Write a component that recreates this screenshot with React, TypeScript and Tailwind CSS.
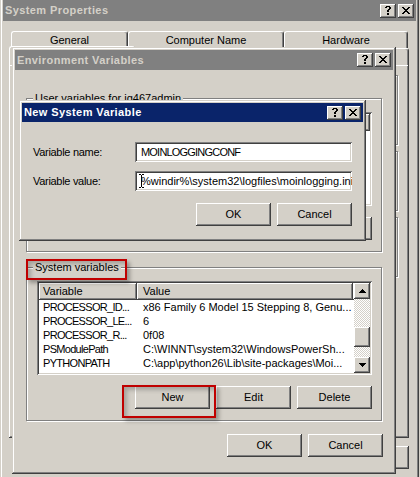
import React from "react";

const raisedWin =
  "shadow-[inset_-1px_-1px_#404040,inset_1px_1px_#d4d0c8,inset_-2px_-2px_#808080,inset_2px_2px_#ffffff]";
const raisedBtn =
  "shadow-[inset_-1px_-1px_#404040,inset_1px_1px_#ffffff,inset_-2px_-2px_#808080]";
const sunken =
  "shadow-[inset_1px_1px_#808080,inset_-1px_-1px_#ffffff,inset_2px_2px_#404040,inset_-2px_-2px_#d4d0c8]";
const etched = "border border-[#808080] shadow-[inset_1px_1px_#ffffff,1px_1px_#ffffff]";

// Pixel glyphs for the caption buttons and scroll arrows
const CLOSE = ["##....##", ".##..##.", "..####..", "...##...", "..####..", ".##..##.", "##....##"];
const HELP = [".####.", "##..##", "....##", "...##.", "..##..", "..##..", "......", "..##..", "..##.."];
const UP = ["...#...", "..###..", ".#####.", "#######"];
const DOWN = ["#######", ".#####.", "..###..", "...#..."];

function Glyph({ rows }: { rows: string[] }) {
  const cells: React.ReactNode[] = [];
  rows.forEach((r, y) =>
    r.split("").forEach((c, x) => {
      if (c === "#") cells.push(<rect key={`${x}-${y}`} x={x} y={y} width={1} height={1} />);
    })
  );
  return (
    <svg width={rows[0].length} height={rows.length} shapeRendering="crispEdges" fill="#000">
      {cells}
    </svg>
  );
}

function CaptionButton({ glyph }: { glyph: string[] }) {
  return (
    <div className={`w-[16px] h-[14px] bg-[#d4d0c8] flex items-center justify-center pr-px pb-px ${raisedBtn}`}>
      <Glyph rows={glyph} />
    </div>
  );
}

function TitleBar({ title, active, h }: { title: string; active?: boolean; h: string }) {
  return (
    <div
      className={`flex items-center justify-between pl-[2px] pr-[2px] shrink-0 ${h} ${
        active ? "bg-[#0a246a] text-white" : "bg-[#808080] text-[#d4d0c8]"
      }`}
    >
      <span className="font-bold text-[11px] tracking-[0.4px]">{title}</span>
      <div className="flex gap-[2px]">
        <CaptionButton glyph={HELP} />
        <CaptionButton glyph={CLOSE} />
      </div>
    </div>
  );
}

function Btn({ children, w = "w-[75px]" }: { children?: React.ReactNode; w?: string }) {
  return (
    <div className={`${w} h-[23px] shrink-0 bg-[#d4d0c8] flex items-center justify-center ${raisedBtn}`}>
      {children}
    </div>
  );
}

function Tab({ label, w, selected }: { label?: string; w: string; selected?: boolean }) {
  return (
    <div
      className={`${w} ${
        selected ? "h-[19px]" : "h-[17px]"
      } shrink-0 flex items-center justify-center border-l border-t border-r border-l-white border-t-white border-r-[#404040] rounded-t-[3px] shadow-[inset_-1px_0_#808080] bg-[#d4d0c8]`}
    >
      {label}
    </div>
  );
}

function HeaderCell({ w, children }: { w: string; children?: React.ReactNode }) {
  return (
    <div className={`${w} h-[17px] shrink-0 bg-[#d4d0c8] flex items-center pl-[4px] ${raisedBtn}`}>{children}</div>
  );
}

type Row = [string, string];

function ScrollBar() {
  return (
    <div className="w-[16px] flex flex-col shrink-0">
      <div className={`h-[16px] bg-[#d4d0c8] flex items-center justify-center pb-px ${raisedBtn}`}>
        <Glyph rows={UP} />
      </div>
      <div className="flex-1 flex flex-col bg-[repeating-conic-gradient(#d4d0c8_0_25%,#ffffff_0_50%)] bg-[length:2px_2px]">
        <div className="h-[28px]" />
        <div className={`h-[20px] bg-[#d4d0c8] ${raisedBtn}`} />
      </div>
      <div className={`h-[16px] bg-[#d4d0c8] flex items-center justify-center ${raisedBtn}`}>
        <Glyph rows={DOWN} />
      </div>
    </div>
  );
}

function ListView({ rows, scroll }: { rows: Row[]; scroll?: boolean }) {
  return (
    <div className={`w-[335px] h-[94px] shrink-0 bg-white p-[2px] flex ${sunken}`}>
      <div className="flex-1 flex flex-col overflow-hidden">
        <div className="flex">
          <HeaderCell w="w-[98px]">{scroll && "Variable"}</HeaderCell>
          <HeaderCell w="w-[216px]">{scroll && <span className="pl-[2px]">Value</span>}</HeaderCell>
          <HeaderCell w="flex-1" />
        </div>
        {rows.map(([k, v]) => (
          <div key={k} className="flex h-[14px] items-center whitespace-nowrap">
            <span className="w-[98px] pl-[4px] shrink-0 tracking-[-0.7px]">{k}</span>
            <span className="pl-[6px]">{v}</span>
          </div>
        ))}
      </div>
      {scroll && <ScrollBar />}
    </div>
  );
}

function VarGroup({ label, rows, scroll }: { label: string; rows: Row[]; scroll?: boolean }) {
  return (
    <div className={`relative w-[356px] h-[154px] shrink-0 pl-[10px] pt-[13px] flex flex-col ${etched}`}>
      <span className="absolute left-[6px] top-[-7px] px-[2px] leading-[13px] bg-[#d4d0c8]">{label}</span>
      <ListView rows={rows} scroll={scroll} />
      <div className="flex justify-end gap-[6px] pr-[9px] mt-[11px]">
        <Btn>{scroll && "New"}</Btn>
        <Btn>{scroll && "Edit"}</Btn>
        <Btn>{scroll && "Delete"}</Btn>
      </div>
    </div>
  );
}

const systemRows: Row[] = [
  ["PROCESSOR_ID...", "x86 Family 6 Model 15 Stepping 8, Genu..."],
  ["PROCESSOR_LE...", "6"],
  ["PROCESSOR_R...", "0f08"],
  ["PSModulePath", "C:\\WINNT\\system32\\WindowsPowerSh..."],
  ["PYTHONPATH", "C:\\app\\python26\\Lib\\site-packages\\Moi..."],
];

function SystemProperties() {
  return (
    <div className={`absolute left-0 top-[-3px] w-[419px] h-[486px] p-[3px] flex flex-col bg-[#d4d0c8] ${raisedWin}`}>
      <TitleBar title="System Properties" h="h-[21px]" />
      <div className="flex flex-col pl-[6px] pt-[10px]">
        <div className="flex pl-[2px]">
          <Tab label="General" w="w-[117px]" />
          <Tab label="Computer Name" w="w-[156px]" />
          <Tab label="Hardware" w="w-[124px]" />
        </div>
        <div className="flex items-end -mt-[2px]">
          <Tab w="w-[126px]" selected />
          <Tab w="w-[162px]" />
          <Tab w="w-[112px]" />
        </div>
        <div className={`w-[400px] h-[373px] flex flex-col gap-[6px] pl-[8px] pr-[11px] pt-[10px] ${raisedBtn}`}>
          <div className={`h-[70px] ${etched}`} />
          <div className={`h-[60px] ${etched}`} />
          <div className={`h-[60px] ${etched}`} />
        </div>
        <div className="flex justify-end gap-[6px] w-[400px] mt-[8px]">
          <Btn />
          <Btn />
          <Btn />
        </div>
      </div>
    </div>
  );
}

function EnvironmentDialog() {
  return (
    <div className={`absolute left-[12px] top-[47px] w-[384px] h-[427px] p-[3px] flex flex-col bg-[#d4d0c8] ${raisedWin}`}>
      <TitleBar title="Environment Variables" h="h-[20px]" />
      <div className="flex flex-col pl-[11px] pt-[28px]">
        <VarGroup label="User variables for jq467admin" rows={[]} />
        <div className="mt-[15px]">
          <VarGroup label="System variables" rows={systemRows} scroll />
        </div>
        <div className="flex justify-end gap-[6px] mt-[13px] w-[357px]">
          <Btn>OK</Btn>
          <Btn>Cancel</Btn>
        </div>
      </div>
    </div>
  );
}

function TextField({ children, cursor, caps }: { children: React.ReactNode; cursor?: boolean; caps?: boolean }) {
  return (
    <div
      className={`relative w-[217px] h-[20px] bg-white flex items-center pl-[6px] overflow-hidden whitespace-nowrap ${sunken}`}
    >
      <span className={`pr-[3px] ${caps ? "tracking-[-0.8px]" : ""}`}>{children}</span>
      {cursor && (
        <svg className="absolute left-[4px] top-[3px]" width="5" height="14" shapeRendering="crispEdges" fill="#000">
          <rect x="0" y="0" width="2" height="1" />
          <rect x="3" y="0" width="2" height="1" />
          <rect x="2" y="1" width="1" height="12" />
          <rect x="0" y="13" width="2" height="1" />
          <rect x="3" y="13" width="2" height="1" />
        </svg>
      )}
    </div>
  );
}

function NewVariableDialog() {
  return (
    <div className={`absolute left-[19px] top-[100px] w-[347px] h-[141px] p-[3px] flex flex-col bg-[#d4d0c8] ${raisedWin}`}>
      <TitleBar title="New System Variable" h="h-[19px]" active />
      <div className="flex flex-col pl-[11px] pr-[11px] pt-[20px]">
        <div className="flex items-center">
          <span className="w-[102px] shrink-0 tracking-[-0.3px]">Variable name:</span>
          <TextField caps>MOINLOGGINGCONF</TextField>
        </div>
        <div className="flex items-center mt-[9px]">
          <span className="w-[102px] shrink-0 tracking-[-0.3px]">Variable value:</span>
          <TextField cursor>%windir%\system32\logfiles\moinlogging.ini</TextField>
        </div>
        <div className="flex justify-end gap-[6px] mt-[12px]">
          <Btn>OK</Btn>
          <Btn>Cancel</Btn>
        </div>
      </div>
    </div>
  );
}

function Callout({ className }: { className: string }) {
  return (
    <div
      className={`absolute border-2 border-[#c00000] shadow-[3px_3px_4px_rgba(0,0,0,0.3),inset_3px_3px_4px_rgba(0,0,0,0.22)] ${className}`}
    />
  );
}

export default function App() {
  return (
    <div className="relative w-[420px] h-[477px] overflow-hidden bg-[#d4d0c8] font-['Liberation_Sans',Arial,sans-serif] text-[11px] tracking-normal text-black leading-none">
      <SystemProperties />
      <EnvironmentDialog />
      <NewVariableDialog />
      <Callout className="left-[26px] top-[259px] w-[101px] h-[21px]" />
      <Callout className="left-[122px] top-[385px] w-[94px] h-[33px]" />
    </div>
  );
}
